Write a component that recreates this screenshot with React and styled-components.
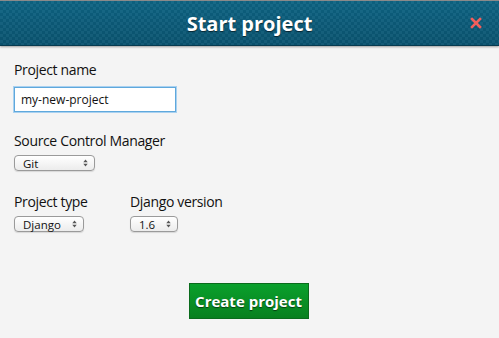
import React from "react";
import styled, { createGlobalStyle } from "styled-components";

const Global = createGlobalStyle`
  html, body { margin: 0; padding: 0; background: #f4f4f4; }
  body { font-family: "Open Sans", "DejaVu Sans", sans-serif; color: #111; }
`;

const Page = styled.div`
  width: 499px;
  height: 338px;
  background: #f4f4f4;
  display: flex;
  flex-direction: column;
  overflow: hidden;
`;

const Header = styled.header`
  position: relative;
  height: 44px;
  border-top: 1px solid #8a8a8a;
  border-bottom: 1px solid #073b50;
  background:
    repeating-conic-gradient(rgba(255,255,255,0.04) 0 25%, rgba(0,0,0,0.04) 0 50%) 0 0 / 6px 6px,
    linear-gradient(#0e6483, #0a5370);
  box-shadow: 0 1px 2px rgba(0,0,0,0.35);
  display: flex;
  align-items: center;
  justify-content: center;
`;

const Title = styled.h1`
  margin: 0;
  font-family: "Open Sans", sans-serif;
  font-weight: 700;
  font-size: 20px;
  color: #fff;
  text-shadow: 0 1px 1px rgba(0,0,0,0.6);
`;

const Close = styled.button`
  position: absolute;
  right: 15px;
  top: 14px;
  width: 16px;
  height: 16px;
  padding: 0;
  border: none;
  background: none;
  display: flex;
  align-items: center;
  justify-content: center;
`;

const Body = styled.div`
  padding: 15px 14px 0;
  display: flex;
  flex-direction: column;
`;

const Field = styled.div`
  display: flex;
  flex-direction: column;
  margin-bottom: ${(p) => p.$mb || 0}px;
`;

const Label = styled.label`
  font-size: 14px;
  letter-spacing: -0.35px;
  line-height: 18px;
  color: #111;
  margin-bottom: ${(p) => p.$gap}px;
`;

const TextInput = styled.input`
  box-sizing: border-box;
  width: 162px;
  height: 25px;
  border: 1px solid #5fa8dc;
  box-shadow: 0 0 0 1px #a9d1f0;
  background: #fff;
  padding: 0 6px;
  font-family: "Open Sans", sans-serif;
  font-size: 12px;
  color: #111;
  outline: none;
`;

const Row = styled.div`
  display: flex;
`;

const SelectBox = styled.div`
  box-sizing: border-box;
  width: ${(p) => p.$w}px;
  height: 16px;
  border: 1px solid #9a9a9a;
  border-radius: 4px;
  background: linear-gradient(#ffffff, #ececec);
  box-shadow: 0 1px 1px rgba(0,0,0,0.12);
  display: flex;
  align-items: center;
  justify-content: space-between;
  padding: 0 6px 0 8px;
  font-size: 11.5px;
  color: #111;
`;

const Arrows = () => (
  <svg width="5" height="8" viewBox="0 0 5 8">
    <path d="M0.3 3.2 L2.5 0.6 L4.7 3.2 Z" fill="#555" />
    <path d="M0.3 4.8 L2.5 7.4 L4.7 4.8 Z" fill="#555" />
  </svg>
);

const Select = ({ w, value }) => (
  <SelectBox $w={w}>
    <span>{value}</span>
    <Arrows />
  </SelectBox>
);

const Column = styled.div`
  width: ${(p) => p.$w}px;
  display: flex;
  flex-direction: column;
  align-items: flex-start;
`;

const Footer = styled.div`
  display: flex;
  justify-content: center;
  padding-top: 51px;
`;

const Button = styled.button`
  box-sizing: border-box;
  width: 120px;
  height: 36px;
  margin-left: -2px;
  border: 1px solid #0a6b1c;
  background: linear-gradient(#0aa02c, #08801f);
  color: #fff;
  font-family: "Open Sans", sans-serif;
  font-weight: 700;
  font-size: 15px;
  text-shadow: 0 1px 1px rgba(0,0,0,0.55);
  padding: 0;
`;

export default function App() {
  return (
    <Page>
      <Global />
      <Header>
        <Title>Start project</Title>
        <Close aria-label="close">
          <svg width="12" height="12" viewBox="0 0 12 12">
            <path d="M2 2 L10 10 M10 2 L2 10" stroke="#f25f5c" strokeWidth="2.6" strokeLinecap="square" />
          </svg>
        </Close>
      </Header>
      <Body>
        <Field $mb={20}>
          <Label $gap={8}>Project name</Label>
          <TextInput defaultValue="my-new-project" />
        </Field>
        <Field $mb={22}>
          <Label $gap={5}>Source Control Manager</Label>
          <Select w={81} value="Git" />
        </Field>
        <Row>
          <Column $w={116}>
            <Label $gap={5}>Project type</Label>
            <Select w={70} value="Django" />
          </Column>
          <Column $w={120}>
            <Label $gap={5}>Django version</Label>
            <Select w={48} value="1.6" />
          </Column>
        </Row>
        <Footer>
          <Button>Create project</Button>
        </Footer>
      </Body>
    </Page>
  );
}
